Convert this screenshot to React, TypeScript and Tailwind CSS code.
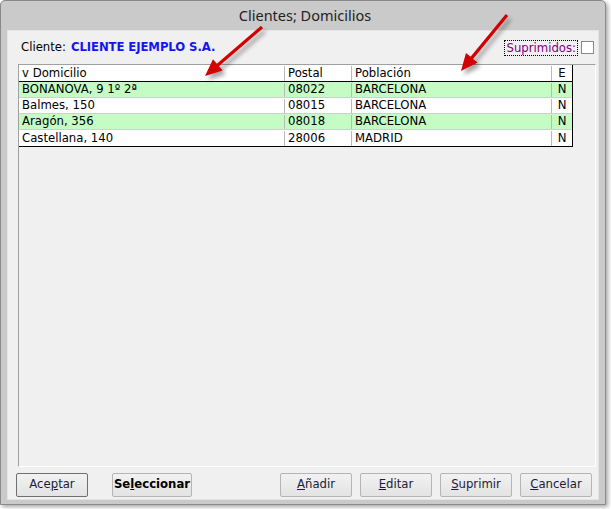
type Row = { dom: string; cp: string; pob: string; e: string };

const rows: Row[] = [
  { dom: "BONANOVA, 9 1º 2ª", cp: "08022", pob: "BARCELONA", e: "N" },
  { dom: "Balmes, 150", cp: "08015", pob: "BARCELONA", e: "N" },
  { dom: "Aragón, 356", cp: "08018", pob: "BARCELONA", e: "N" },
  { dom: "Castellana, 140", cp: "28006", pob: "MADRID", e: "N" },
];

const font = { fontFamily: '"DejaVu Sans", Verdana, sans-serif' };

function arrowPoints(x1: number, y1: number, x2: number, y2: number) {
  const dx = x2 - x1;
  const dy = y2 - y1;
  const len = Math.hypot(dx, dy);
  const ux = dx / len;
  const uy = dy / len;
  const nx = -uy;
  const ny = ux;
  const head = 17;
  const hw = 7.5;
  const sw = 1.6;
  const bx = x2 - ux * head;
  const by = y2 - uy * head;
  const pts = [
    [x1 + nx * sw, y1 + ny * sw],
    [bx + nx * sw, by + ny * sw],
    [bx + nx * hw, by + ny * hw],
    [x2, y2],
    [bx - nx * hw, by - ny * hw],
    [bx - nx * sw, by - ny * sw],
    [x1 - nx * sw, y1 - ny * sw],
  ];
  return pts.map((p) => p.join(",")).join(" ");
}

function Arrow({ x1, y1, x2, y2 }: { x1: number; y1: number; x2: number; y2: number }) {
  return (
    <g>
      <polygon
        points={arrowPoints(x1 + 3, y1 + 4, x2 + 3, y2 + 4)}
        fill="#000"
        opacity={0.35}
        filter="url(#soft)"
      />
      <polygon points={arrowPoints(x1, y1, x2, y2)} fill="#d40000" />
    </g>
  );
}

function Btn({
  children,
  className = "",
  strong = false,
}: {
  children: React.ReactNode;
  className?: string;
  strong?: boolean;
}) {
  return (
    <button
      className={`h-[24px] w-[72px] rounded-[2px] border bg-gradient-to-b from-[#f2f2f2] to-[#e3e3e3] text-[11.7px] text-[#1b1b3a] ${
        strong ? "border-[#6f6f6f]" : "border-[#b5b5b5]"
      } ${className}`}
      style={font}
    >
      {children}
    </button>
  );
}

function Cell({
  w,
  children,
  center = false,
  last = false,
}: {
  w: string;
  children: React.ReactNode;
  center?: boolean;
  last?: boolean;
}) {
  return (
    <div
      className={`${w} h-full flex items-center ${center ? "justify-center" : "pl-[3px]"} ${
        last ? "" : "border-r border-[#b9b9b9]"
      } whitespace-nowrap overflow-hidden`}
    >
      {children}
    </div>
  );
}

export default function App() {
  return (
    <div className="relative w-[611px] h-[509px] bg-white overflow-hidden">
      <div className="w-[606px] h-[505px] border border-[#8a8a8a] rounded-t-[5px] bg-[#cacaca] shadow-[2px_2px_4px_rgba(0,0,0,0.35)] flex flex-col">
        <div className="h-[29px] flex items-center justify-center pl-[4px] text-[14.5px] text-[#222]" style={{ fontFamily: '"Noto Sans", sans-serif' }}>
          Clientes; Domicilios
        </div>

        <div className="ml-[6px] w-[592px] h-[470px] border border-[#e4e4e4] bg-[#f0f0f0] flex flex-col text-[11.7px]" style={font}>
          <div className="h-[33px] flex items-center pl-[13px] pr-[4px]">
            <span className="text-black">Cliente:</span>
            <span className="ml-[5px] font-bold text-[#1515f0] tracking-[-0.1px]">CLIENTE EJEMPLO S.A.</span>
            <div className="ml-auto flex items-center gap-[3px]">
              <span className="px-[1px] border border-dotted border-black text-[#800080] leading-[14px]">Suprimidos:</span>
              <span className="w-[13px] h-[13px] border border-[#8a8a8a] bg-white" />
            </div>
          </div>

          <div className="ml-[10px] w-[578px] h-[403px] border border-t-[#a0a0a0] border-l-[#a0a0a0] border-r-white border-b-white bg-[#f0f0f0]">
            <div className="w-[554px] border-r border-b border-black bg-white">
              <div className="h-[17px] flex border-b border-black pt-[1px]">
                <Cell w="w-[266px]">v Domicilio</Cell>
                <Cell w="w-[67px]">Postal</Cell>
                <Cell w="w-[200px]">Población</Cell>
                <Cell w="w-[20px]" center last>E</Cell>
              </div>
              {rows.map((r, i) => (
                <div
                  key={r.dom}
                  className={`h-[16px] flex pt-[1px] ${i < rows.length - 1 ? "border-b border-[#cfcfcf]" : ""} ${
                    i % 2 === 0 ? "bg-[#c4fcc4]" : "bg-white"
                  }`}
                >
                  <Cell w="w-[266px]">{r.dom}</Cell>
                  <Cell w="w-[67px]">{r.cp}</Cell>
                  <Cell w="w-[200px]">{r.pob}</Cell>
                  <Cell w="w-[20px]" center last>{r.e}</Cell>
                </div>
              ))}
            </div>
          </div>

          <div className="mt-[6px] flex items-center pl-[8px]">
            <Btn strong>
              Ace<u>p</u>tar
            </Btn>
            <Btn className="ml-[24px] w-[80px] font-bold text-black">
              Se<u>l</u>eccionar
            </Btn>
            <Btn className="ml-[88px]">
              <u>A</u>ñadir
            </Btn>
            <Btn className="ml-[8px]">
              <u>E</u>ditar
            </Btn>
            <Btn className="ml-[8px]">
              <u>S</u>uprimir
            </Btn>
            <Btn className="ml-[8px]">
              <u>C</u>ancelar
            </Btn>
          </div>
        </div>
      </div>

      <svg className="absolute inset-0 pointer-events-none" width={611} height={509}>
        <defs>
          <filter id="soft" x="-20%" y="-20%" width="140%" height="140%">
            <feGaussianBlur stdDeviation="2" />
          </filter>
        </defs>
        <Arrow x1={262} y1={27} x2={205} y2={76} />
        <Arrow x1={507} y1={15} x2={461} y2={71} />
      </svg>
    </div>
  );
}
